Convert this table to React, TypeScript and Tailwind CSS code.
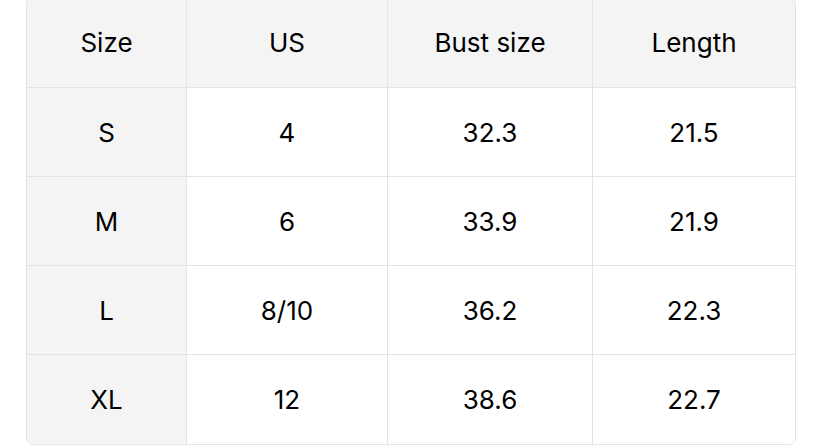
import React from "react";

const rows = [
  ["S", "4", "32.3", "21.5"],
  ["M", "6", "33.9", "21.9"],
  ["L", "8/10", "36.2", "22.3"],
  ["XL", "12", "38.6", "22.7"],
];
const head = ["Size", "US", "Bust size", "Length"];

export default function App() {
  return (
    <div
      className="w-[828px] h-[447px] bg-white overflow-hidden pl-[26px]"
      style={{ fontFamily: "Inter, 'Liberation Sans', sans-serif" }}
    >
      <div className="-mt-[3px] w-[770px] border border-[#e3e3e3] rounded-[7px] overflow-hidden text-[26px] text-black">
        <div className="grid grid-cols-[160px_201px_205px_202px] h-[90px] bg-[#f4f4f4] border-b border-[#e3e3e3]">
          {head.map((h, i) => (
            <div
              key={h}
              className={`flex items-center justify-center ${i < 3 ? "border-r border-[#e3e3e3]" : ""}`}
            >
              {h}
            </div>
          ))}
        </div>
        {rows.map((r, ri) => (
          <div
            key={ri}
            className={`grid grid-cols-[160px_201px_205px_202px] h-[89px] ${ri < 3 ? "border-b border-[#e3e3e3]" : ""}`}
          >
            {r.map((c, i) => (
              <div
                key={i}
                className={`flex items-center justify-center ${i === 0 ? "bg-[#f4f4f4]" : "bg-white"} ${i < 3 ? "border-r border-[#e3e3e3]" : ""}`}
              >
                {c}
              </div>
            ))}
          </div>
        ))}
      </div>
    </div>
  );
}
